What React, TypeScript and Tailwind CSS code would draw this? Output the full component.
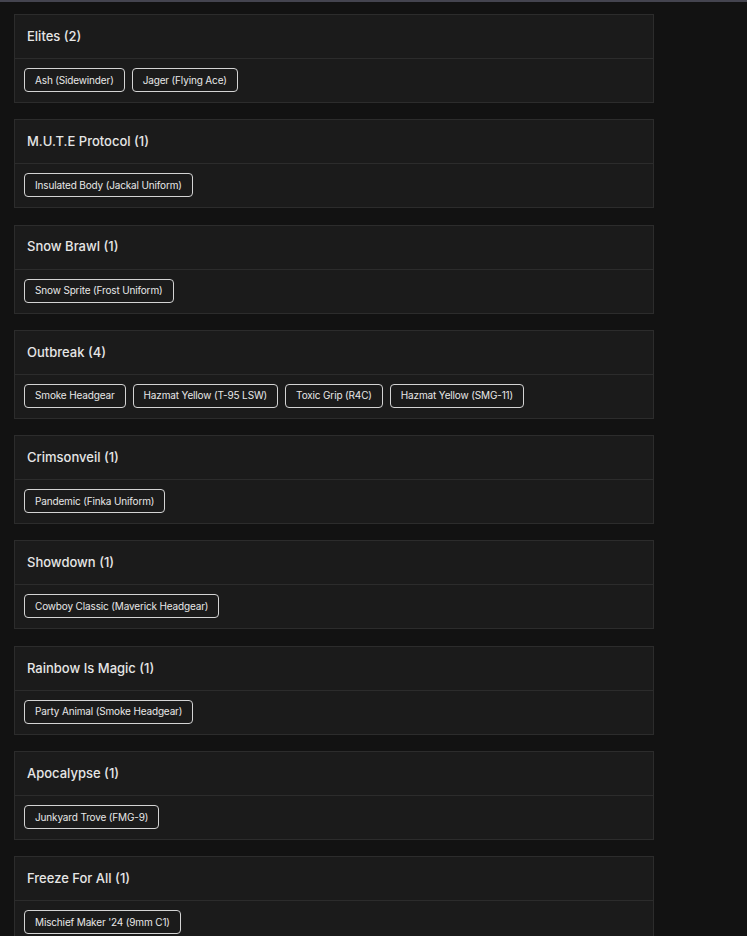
import React from "react";

const groups: { title: string; items: string[] }[] = [
  { title: "Elites (2)", items: ["Ash (Sidewinder)", "Jager (Flying Ace)"] },
  { title: "M.U.T.E Protocol (1)", items: ["Insulated Body (Jackal Uniform)"] },
  { title: "Snow Brawl (1)", items: ["Snow Sprite (Frost Uniform)"] },
  {
    title: "Outbreak (4)",
    items: ["Smoke Headgear", "Hazmat Yellow (T-95 LSW)", "Toxic Grip (R4C)", "Hazmat Yellow (SMG-11)"],
  },
  { title: "Crimsonveil (1)", items: ["Pandemic (Finka Uniform)"] },
  { title: "Showdown (1)", items: ["Cowboy Classic (Maverick Headgear)"] },
  { title: "Rainbow Is Magic (1)", items: ["Party Animal (Smoke Headgear)"] },
  { title: "Apocalypse (1)", items: ["Junkyard Trove (FMG-9)"] },
  { title: "Freeze For All (1)", items: ["Mischief Maker '24 (9mm C1)"] },
];

export default function App() {
  return (
    <div
      className="min-h-screen w-full bg-[#121212] overflow-hidden"
      style={{ fontFamily: "Inter, 'Open Sans', sans-serif" }}
    >
      <div className="h-[3px] w-full bg-[#121212] border-t-[2px] border-[#44444f]" />
      <div className="flex flex-col gap-[16.3px] pl-[14px] pt-[11px] h-[933px] overflow-hidden">
        {groups.map((g) => (
          <div key={g.title} className="w-[640px] shrink-0 border border-[#2c2c2c] bg-[#1b1b1b]">
            <div className="h-[44px] flex items-center px-[12px] border-b border-[#2c2c2c]">
              <span className="text-[13px] font-medium text-[#e6e6e6]">{g.title}</span>
            </div>
            <div className="flex flex-wrap gap-[7px] px-[9px] py-[9px] h-[43px]">
              {g.items.map((it) => (
                <div
                  key={it}
                  className="h-[24px] flex items-center px-[10px] border border-[#d4d4d4] rounded-[4px] text-[10px] tracking-[-0.15px] text-[#e8e8e8] bg-[#1b1b1b]"
                >
                  {it}
                </div>
              ))}
            </div>
          </div>
        ))}
      </div>
    </div>
  );
}
